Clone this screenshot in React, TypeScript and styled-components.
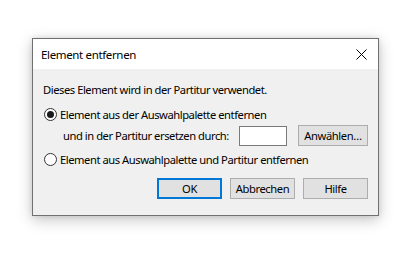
import React from "react";
import styled, { createGlobalStyle } from "styled-components";

const Global = createGlobalStyle`
  html, body { margin: 0; padding: 0; background: #ffffff; }
  body { font-family: "Noto Sans", "Liberation Sans", sans-serif; font-size: 11px; color: #000; }
`;

const Desktop = styled.div`
  width: 417px;
  height: 275px;
  padding: 38px 0 0 32px;
  box-sizing: border-box;
`;

const Window = styled.div`
  width: 347px;
  height: 178px;
  box-sizing: border-box;
  border: 1px solid #707070;
  background: #f0f0f0;
  box-shadow: 0 4px 14px rgba(0, 0, 0, 0.22), 0 0 6px rgba(0, 0, 0, 0.1);
  display: flex;
  flex-direction: column;
`;

const TitleBar = styled.div`
  height: 30px;
  background: #ffffff;
  display: flex;
  align-items: center;
  justify-content: space-between;
  padding: 0 10px 0 8px;
`;

const Title = styled.span`
  font-size: 11.5px;
  letter-spacing: -0.35px;
`;

const Close = styled.svg`
  width: 11px;
  height: 11px;
  margin-right: 1px;
`;

const Body = styled.div`
  padding: 10px 10px 0 10px;
  display: flex;
  flex-direction: column;
`;

const Line = styled.div<{ $indent?: number; $mt?: number }>`
  display: flex;
  align-items: center;
  height: 21px;
  padding-left: ${(p) => p.$indent ?? 0}px;
  margin-top: ${(p) => p.$mt ?? 0}px;
  white-space: nowrap;
`;

const Text = styled.span`
  font-size: 11.2px;
  letter-spacing: -0.45px;
`;

const Radio = styled.span<{ $checked?: boolean }>`
  width: 13px;
  height: 13px;
  box-sizing: border-box;
  border: 1px solid #333333;
  border-radius: 50%;
  background: #ffffff;
  margin: 0 3px 0 1px;
  display: flex;
  align-items: center;
  justify-content: center;
  flex: none;
  &::after {
    content: "";
    width: 7px;
    height: 7px;
    border-radius: 50%;
    background: #1a1a1a;
    display: ${(p) => (p.$checked ? "block" : "none")};
  }
`;

const Input = styled.div`
  width: 48px;
  height: 20px;
  box-sizing: border-box;
  border: 1px solid #7a7a7a;
  background: #ffffff;
  margin-left: 10px;
  flex: none;
`;

const Button = styled.div<{ $w?: number; $default?: boolean }>`
  width: ${(p) => p.$w ?? 65}px;
  height: 21px;
  box-sizing: border-box;
  border: ${(p) => (p.$default ? "2px solid #0078d7" : "1px solid #adadad")};
  background: #e1e1e1;
  display: flex;
  align-items: center;
  justify-content: center;
  font-size: 11.2px;
  letter-spacing: -0.4px;
  flex: none;
`;

const Spacer = styled.div`
  flex: 1;
`;

const ButtonRow = styled.div`
  display: flex;
  justify-content: flex-end;
  gap: 8px;
  margin-top: 8px;
`;

export default function App() {
  return (
    <>
      <Global />
      <Desktop>
        <Window>
          <TitleBar>
            <Title>Element entfernen</Title>
            <Close viewBox="0 0 11 11">
              <path d="M0.5 0.5 L10.5 10.5 M10.5 0.5 L0.5 10.5" stroke="#000" strokeWidth="1" fill="none" />
            </Close>
          </TitleBar>
          <Body>
            <Line>
              <Text>Dieses Element wird in der Partitur verwendet.</Text>
            </Line>
            <Line $mt={4}>
              <Radio $checked />
              <Text>Element aus der Auswahlpalette entfernen</Text>
            </Line>
            <Line $indent={20}>
              <Text>und in der Partitur ersetzen durch:</Text>
              <Input />
              <Spacer />
              <Button $w={70}>Anwählen…</Button>
            </Line>
            <Line $mt={3}>
              <Radio />
              <Text>Element aus Auswahlpalette und Partitur entfernen</Text>
            </Line>
            <ButtonRow>
              <Button $default>OK</Button>
              <Button>Abbrechen</Button>
              <Button>Hilfe</Button>
            </ButtonRow>
          </Body>
        </Window>
      </Desktop>
    </>
  );
}
